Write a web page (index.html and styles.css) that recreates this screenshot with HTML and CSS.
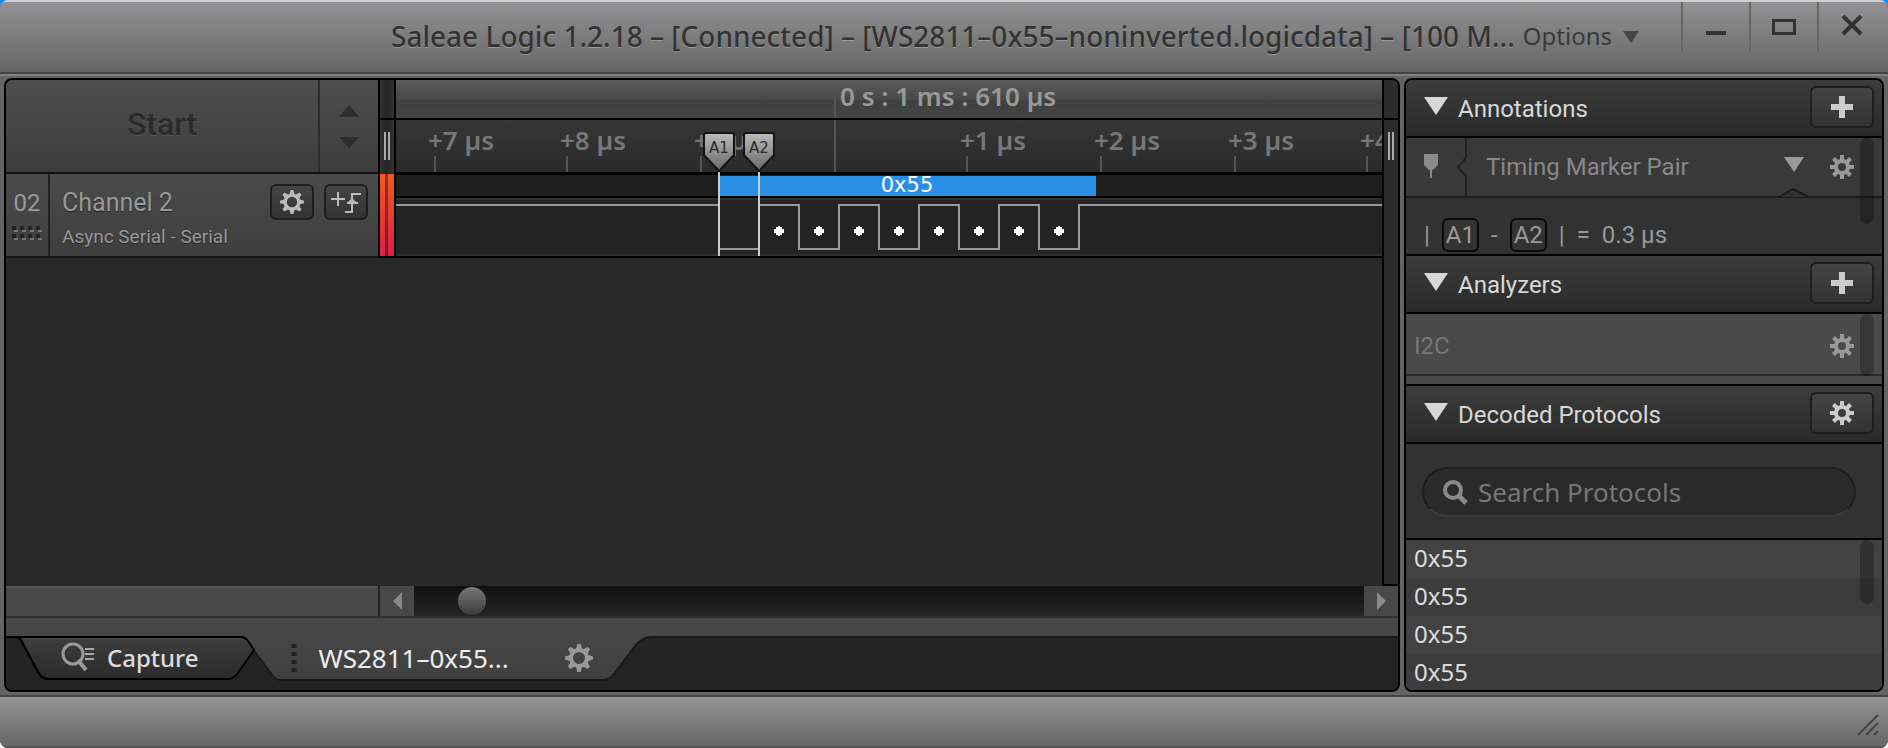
FILE: index.html
```html
<!DOCTYPE html>
<html lang="en">
<head>
<meta charset="utf-8">
<title>Saleae Logic 1.2.18</title>
<link rel="stylesheet" href="styles.css">
</head>
<body>
<svg class="defs" aria-hidden="true">
  <symbol id="gear" viewBox="-14 -14 28 28">
    <circle r="8" fill="none" stroke="currentColor" stroke-width="4"/>
    <g fill="currentColor">
      <path d="M-3 -9L-1.600 -14H1.600L3 -9Z"/>
      <path d="M-3 -9L-1.600 -14H1.600L3 -9Z" transform="rotate(45)"/>
      <path d="M-3 -9L-1.600 -14H1.600L3 -9Z" transform="rotate(90)"/>
      <path d="M-3 -9L-1.600 -14H1.600L3 -9Z" transform="rotate(135)"/>
      <path d="M-3 -9L-1.600 -14H1.600L3 -9Z" transform="rotate(180)"/>
      <path d="M-3 -9L-1.600 -14H1.600L3 -9Z" transform="rotate(225)"/>
      <path d="M-3 -9L-1.600 -14H1.600L3 -9Z" transform="rotate(270)"/>
      <path d="M-3 -9L-1.600 -14H1.600L3 -9Z" transform="rotate(315)"/>
    </g>
  </symbol>
  <symbol id="cog" viewBox="-12 -12 24 24">
    <circle r="6" fill="none" stroke="currentColor" stroke-width="4"/>
    <path d="M0 -12V-7M0 12V7M-12 0H-7M12 0H7M-8.500 -8.500L-5 -5M8.500 8.500L5 5M-8.500 8.500L-5 5M8.500 -8.500L5 -5" stroke="currentColor" stroke-width="4"/>
  </symbol>
  <symbol id="plus" viewBox="0 0 22 22"><path d="M8 0H14V8H22V14H14V22H8V14H0V8H8Z" fill="currentColor"/></symbol>
  <symbol id="down" viewBox="0 0 24 18"><path d="M0 0H24L12 18Z" fill="currentColor"/></symbol>
</svg>

<div class="window">
  <header class="titlebar">
    <h1 class="title">Saleae Logic 1.2.18 – [Connected] – [WS2811–0x55–noninverted.logicdata] – [100 M...</h1>
    <button class="options" type="button">Options <svg class="caret" width="18" height="12"><use href="#down"/></svg></button>
    <div class="winbtns">
      <button type="button" aria-label="Minimize"><svg width="26" height="24"><path d="M3 18H23" stroke="#333" stroke-width="4"/></svg></button>
      <button type="button" aria-label="Maximize"><svg width="26" height="24"><path d="M2.500 5.500H23.500V18.500H2.500Z" fill="none" stroke="#333" stroke-width="3"/></svg></button>
      <button type="button" aria-label="Close"><svg width="26" height="24"><path d="M4 1L22 19M22 1L4 19" stroke="#333" stroke-width="4"/></svg></button>
    </div>
  </header>

  <div class="body">
    <main class="capture">
      <div class="device">
        <div class="start">
          <button class="start-btn" type="button" disabled>Start</button>
          <button class="spin" type="button" aria-label="Capture settings"><svg width="20" height="44"><path d="M0 13L10 1L20 13Z" fill="#2c2c2c"/><path d="M0 33H20L10 44Z" fill="#2c2c2c"/></svg></button>
        </div>
        <div class="split split-l"><i></i><b></b></div>
        <div class="time">
          <svg class="chart" role="img" aria-label="Channel 2 timeline">
            <defs>
              <linearGradient id="g1" x1="0" y1="0" x2="0" y2="1"><stop offset="0" stop-color="#5c5c5c"/><stop offset=".5" stop-color="#484848"/><stop offset=".55" stop-color="#404040"/><stop offset="1" stop-color="#454545"/></linearGradient>
              <linearGradient id="g2" x1="0" y1="0" x2="0" y2="1"><stop offset="0" stop-color="#363636"/><stop offset="1" stop-color="#2a2a2a"/></linearGradient>
              <linearGradient id="g3" x1="0" y1="0" x2="0" y2="1"><stop offset="0" stop-color="#bbb"/><stop offset="1" stop-color="#666"/></linearGradient>
            </defs>
            <rect width="100%" height="178" fill="#000"/>
            <rect width="100%" height="38" fill="url(#g1)"/>
            <rect y="40" width="100%" height="52" fill="url(#g2)"/>
            <rect y="95" width="100%" height="21" fill="#1f1f1f"/>
            <rect y="118" width="100%" height="58" fill="#232323"/>
            <path d="M0 119H3000M0 175H3000" stroke="#303030" stroke-width="2"/>
            <path d="M439 16V38M439 40V92" stroke="#555" stroke-width="2"/>
            <path d="M39 76V92M171 76V92M305 76V92M571 76V92M705 76V92M839 76V92M971 76V92" stroke="#555" stroke-width="2"/>
            <text class="clock" x="444" y="26">0 s : 1 ms : 610 µs</text>
            <g class="ticks">
              <text x="32" y="70">+7 µs</text><text x="164" y="70">+8 µs</text><text x="298" y="70">+9 µs</text>
              <text x="564" y="70">+1 µs</text><text x="698" y="70">+2 µs</text><text x="832" y="70">+3 µs</text><text x="964" y="70">+4 µs</text>
            </g>
            <rect x="324" y="96" width="376" height="20" fill="#2a90e6"/>
            <text class="byte" x="511" y="112" text-anchor="middle">0x55</text>
            <path d="M0 125H323V169H363V125H403V169H443V125H483V169H523V125H563V169H603V125H643V169H683V125H3000" fill="none" stroke="#999" stroke-width="2"/>
            <g fill="#fff">
              <path id="dot" d="M382 146H384V147H386V149H388V153H386V155H384V156H382V155H380V153H378V149H380V147H382Z"/>
              <use href="#dot" x="40"/><use href="#dot" x="80"/><use href="#dot" x="120"/><use href="#dot" x="160"/><use href="#dot" x="200"/><use href="#dot" x="240"/><use href="#dot" x="280"/>
            </g>
            <path d="M323 92V176M363 92V176" stroke="#ccc" stroke-width="2"/>
            <g stroke="#141414" stroke-width="2" fill="url(#g3)">
              <path d="M310 53H336Q338 53 338 55V75L323 91L308 75V55Q308 53 310 53Z"/>
              <path d="M350 53H376Q378 53 378 55V75L363 91L348 75V55Q348 53 350 53Z"/>
            </g>
            <g class="tag" text-anchor="middle"><text x="323" y="73">A1</text><text x="363" y="73">A2</text></g>
          </svg>
        </div>
        <div class="split split-r"><i></i><b></b></div>

        <section class="channel">
          <div class="num"><span>02</span><svg width="30" height="14" class="grip"><path d="M0 2H30M0 10H30" stroke="#222" stroke-width="4" stroke-dasharray="4 4"/><path d="M2 5H32M2 13H32" stroke="#777" stroke-width="2" stroke-dasharray="4 4"/></svg></div>
          <div class="names"><strong>Channel 2</strong><small>Async Serial - Serial</small></div>
          <button class="btn small" type="button" aria-label="Channel settings"><svg width="24" height="24"><use href="#gear"/></svg></button>
          <button class="btn small" type="button" aria-label="Add trigger"><svg width="32" height="26"><path d="M1 10H15M8 3V17M15 23H22V5H31M17 14H28" fill="none" stroke="currentColor" stroke-width="2"/><path d="M17 14L22 9L27 14Z" fill="currentColor"/></svg></button>
        </section>
        <div class="bar"></div>

        <div class="hleft"></div>
        <div class="hscroll">
          <button type="button" aria-label="Scroll left"><svg width="9" height="18"><path d="M9 0V18L0 9Z" fill="#8a8a8a"/></svg></button>
          <div class="track"><div class="knob"></div></div>
          <button type="button" aria-label="Scroll right"><svg width="9" height="18"><path d="M0 0V18L9 9Z" fill="#8a8a8a"/></svg></button>
        </div>
      </div>

      <nav class="tabs">
        <svg class="tabshape" aria-hidden="true">
          <defs>
            <linearGradient id="g4" x1="0" y1="0" x2="0" y2="1"><stop offset="0" stop-color="#494949"/><stop offset="1" stop-color="#3f3f3f"/></linearGradient>
            <linearGradient id="g5" x1="0" y1="0" x2="0" y2="1"><stop offset="0" stop-color="#3e3e3e"/><stop offset="1" stop-color="#2a2a2a"/></linearGradient>
          </defs>
          <path d="M0 0H3000V19H645Q637 19 630 27L608 56Q604 62 596 62H274Q270 62 266 57L243 26Q238 19 232 19H0Z" fill="url(#g4)"/>
          <path d="M3000 19H645Q637 19 630 27L608 56Q604 62 596 62H274Q270 62 266 57L243 26" fill="none" stroke="#191919" stroke-width="2"/>
          <path d="M10 19H235Q239 19 242 23L248 32L234 52Q229 61 221 61H42Q36 61 32 54L17 26Q14 19 10 19Z" fill="url(#g5)" stroke="#000" stroke-width="2"/>
          <path d="M16 21H236" stroke="#4a4a4a" stroke-width="1"/>
          <path d="M0 19H10L14 22L34 62H0Z" fill="#232323"/>
          <path d="M0 19H10Q14 19 17 26L32 54Q36 61 42 61" fill="none" stroke="#000" stroke-width="2"/>
        </svg>
        <button class="tab tab-cap" type="button"><svg width="34" height="30"><circle cx="12" cy="12" r="10" fill="none" stroke="#999" stroke-width="3"/><path d="M17 18L25 28" stroke="#999" stroke-width="4"/><path d="M24 7H33M24 12H33M24 17H33" stroke="#aaa" stroke-width="2"/></svg>Capture</button>
        <div class="tab tab-file">
          <svg width="6" height="28"><path d="M3 0V28" stroke="#222" stroke-width="5" stroke-dasharray="4 4"/></svg>
          <span>WS2811–0x55...</span>
          <button type="button" aria-label="Tab settings"><svg width="28" height="28"><use href="#gear"/></svg></button>
        </div>
      </nav>
    </main>

    <aside class="side">
      <div class="head"><svg width="24" height="18"><use href="#down"/></svg><h2>Annotations</h2><button class="btn wide" type="button" aria-label="Add annotation"><svg width="22" height="22"><use href="#plus"/></svg></button></div>
      <div class="annot">
        <div class="scroll-thumb t1"></div>
        <div class="pair">
          <svg class="pin" width="50" height="58"><path d="M18 16H32V27L27 32H26V40H24V32H23L18 27Z" fill="#8a8a8a"/></svg>
          <svg class="notch" width="12" height="58"><path d="M10 0V20L2 29L10 38V58" fill="none" stroke="#222" stroke-width="2"/></svg>
          <span class="pair-name">Timing Marker Pair</span>
          <svg class="pair-down" width="20" height="15"><use href="#down"/></svg>
          <button type="button" aria-label="Pair settings"><svg width="24" height="24"><use href="#cog"/></svg></button>
          <svg class="peak" width="32" height="10"><path d="M1 9L15 1L31 9" fill="#303030" stroke="#1c1c1c" stroke-width="2"/></svg>
        </div>
        <div class="formula"><span>|</span><kbd>A1</kbd><span>-</span><kbd>A2</kbd><span>|</span><span>=</span><span>0.3 µs</span></div>
      </div>
      <div class="head"><svg width="24" height="18"><use href="#down"/></svg><h2>Analyzers</h2><button class="btn wide" type="button" aria-label="Add analyzer"><svg width="22" height="22"><use href="#plus"/></svg></button></div>
      <div class="analyzers">
        <div class="scroll-thumb t2"></div>
        <div class="analyzer"><span>I2C</span><button type="button" aria-label="Analyzer settings"><svg width="24" height="24"><use href="#cog"/></svg></button></div>
      </div>
      <div class="head"><svg width="24" height="18"><use href="#down"/></svg><h2>Decoded Protocols</h2><button class="btn wide" type="button" aria-label="Protocol settings"><svg width="24" height="24"><use href="#cog"/></svg></button></div>
      <div class="search">
        <label class="field"><svg width="26" height="26"><circle cx="11" cy="11" r="8" fill="none" stroke="#8a8a8a" stroke-width="4"/><path d="M16 16L24 24" stroke="#8a8a8a" stroke-width="5"/></svg><input type="text" placeholder="Search Protocols" aria-label="Search Protocols"></label>
      </div>
      <div class="results">
        <div class="scroll-thumb t3"></div>
        <ul><li>0x55</li><li>0x55</li><li>0x55</li><li>0x55</li></ul>
      </div>
    </aside>
  </div>

  <footer class="status"><svg width="22" height="22"><path d="M1 21L21 1M9 21L21 9M17 21L21 17" stroke="#444" stroke-width="2"/></svg></footer>
</div>
</body>
</html>
```

FILE: styles.css
```css
* { box-sizing: border-box; }
body {
  margin: 0;
  height: 100vh;
  background: linear-gradient(#0a8cff 50%, #fff 50%);
  font-family: Roboto, "Liberation Sans", sans-serif;
  font-size: 24px;
  color: #999;
}
button { background: none; border: 0; padding: 0; margin: 0; font: inherit; color: inherit; display: flex; align-items: center; justify-content: center; }
svg { display: block; flex: none; }
.defs { position: absolute; width: 0; height: 0; }

.window { height: 100vh; min-height: 700px; display: flex; flex-direction: column; background: #646464; border-radius: 8px; overflow: hidden; }

.titlebar { height: 74px; flex: none; display: flex; align-items: flex-start; padding-right: 3px; background: linear-gradient(#929294, #666); border-top: 2px solid #cfd0d2; border-bottom: 2px solid #444; font-family: "Noto Sans", sans-serif; color: #333; }
.title { flex: 1; margin: 0; padding-right: 8px; line-height: 68px; font-size: 28px; font-weight: 500; text-align: right; white-space: nowrap; overflow: hidden; text-shadow: 0 1px 0 #999; }
.options { height: 66px; gap: 10px; color: #3a3a3a; margin-right: 41px; }
.caret { margin-top: 4px; color: #444; }
.winbtns { display: flex; }
.winbtns button { width: 68px; height: 50px; border-left: 2px solid #666; }

.body { flex: 1; min-height: 0; display: flex; gap: 4px; padding: 2px 4px 3px; border-top: 2px solid #808080; }
.capture { flex: 1; min-width: 0; display: flex; flex-direction: column; border: 2px solid #000; border-radius: 8px; overflow: hidden; background: #282828; }
.device { flex: 1; min-height: 0; display: grid; grid-template-columns: 372px 18px 1fr 16px; grid-template-rows: 94px 84px 1fr 32px; }

.start { display: flex; background: linear-gradient(#4e4e4e, #3d3d3d); border-bottom: 2px solid #111; }
.start-btn { flex: 1; font-size: 32px; font-weight: 500; color: #2b2b2b; text-shadow: 0 1px 0 #555; padding-bottom: 4px; }
.spin { width: 60px; border-left: 2px solid #2c2c2c; }
.split { background: linear-gradient(90deg, #333, #242424 50%, #333); border: solid #000; border-width: 0 2px; display: flex; flex-direction: column; align-items: center; }
.split i { width: 100%; height: 40px; border-bottom: 2px solid #000; }
.split b { width: 6px; height: 28px; margin-top: 12px; border: solid #aaa; border-width: 0 2px; }
.split-r { grid-column: 4; grid-row: 1 / 4; border-width: 0 0 2px 2px; background: #2c2c2c; }
.time { grid-column: 3; grid-row: 1 / 3; overflow: hidden; }
.chart { width: 100%; height: 178px; }
.clock, .ticks { font-family: "Noto Sans", sans-serif; font-weight: 600; font-size: 26px; }
.clock { fill: #999; }
.ticks { fill: #777; }
.byte { font: 21px "DejaVu Sans", sans-serif; fill: #fff; }
.tag { font: 15px "DejaVu Sans", sans-serif; fill: #2c2c2c; }

.channel { grid-column: 1; grid-row: 2; display: flex; background: linear-gradient(#4b4b4b, #3e3e3e); border-bottom: 2px solid #151515; padding-right: 10px; }
.num { width: 44px; border-right: 2px solid #222; display: flex; flex-direction: column; align-items: center; padding-top: 14px; gap: 8px; line-height: 30px; }
.names { flex: 1; display: flex; flex-direction: column; padding: 14px 0 0 12px; text-shadow: 0 1px 1px #222; }
.names strong { font-weight: 400; line-height: 30px; font-size: 25px; }
.names small { font-size: 19px; line-height: 38px; }
.btn { border: 2px solid #1e1e1e; border-radius: 6px; background: linear-gradient(#444, #333); color: #bbb; }
.small { width: 44px; height: 36px; margin: 10px 0 0 10px; }
.bar { grid-column: 2; grid-row: 2; border: solid #000; border-width: 0 2px 2px; background: linear-gradient(90deg, transparent 35%, #0006 35% 60%, transparent 60%), linear-gradient(#f4581e, #dd1f48); }

.hleft { grid-column: 1; grid-row: 4; background: #484848; border-top: 2px solid #555; border-bottom: 2px solid #333; }
.hscroll { grid-column: 2 / 5; grid-row: 4; display: flex; border-left: 2px solid #222; border-bottom: 2px solid #333; }
.hscroll button { width: 34px; background: #484848; }
.track { flex: 1; padding: 1px 0 0 44px; background: linear-gradient(#101010, #262626); }
.knob { width: 28px; height: 28px; border-radius: 50%; background: linear-gradient(#777, #3c3c3c); }

.tabs { position: relative; height: 72px; flex: none; display: flex; background: #232323; }
.tabshape { position: absolute; inset: 0; width: 100%; height: 100%; }
.tab { position: relative; display: flex; align-items: center; color: #ddd; }
.tab-cap { margin: 19px 0 0 55px; height: 40px; gap: 12px; font: 500 24px "Noto Sans", sans-serif; }
.tab-file { margin: 20px 0 0 92px; height: 40px; font: 26px "Noto Sans", sans-serif; color: #eee; }
.tab-file span { padding: 0 56px 0 22px; }
.tab-file button { color: #999; }

.side { width: 480px; flex: none; display: flex; flex-direction: column; border: 2px solid #000; border-radius: 8px; overflow: hidden; background: #323232; }
.head { flex: none; height: 58px; display: flex; align-items: center; gap: 10px; padding: 0 8px 0 18px; background: linear-gradient(#3c3c3c, #2a2a2a); border-bottom: 2px solid #000; color: #d8d8d8; }
.head > svg { margin-bottom: 4px; }
.head h2 { flex: 1; margin: 0; padding-top: 2px; font-size: 24px; font-weight: 400; }
.wide { width: 64px; height: 42px; color: #ccc; margin-bottom: 2px; }
.annot, .analyzers, .results { position: relative; }
.annot { height: 118px; border-bottom: 2px solid #000; overflow: hidden; }
.scroll-thumb { position: absolute; z-index: 1; top: 0; right: 8px; width: 14px; border-radius: 7px; background: #0004; }
.t1 { height: 86px; }
.t2 { height: 62px; }
.t3 { height: 64px; }
.pair { position: relative; height: 60px; display: flex; align-items: center; padding-right: 28px; background: #393939; border-bottom: 2px solid #1c1c1c; }
.pair-name { flex: 1; padding-left: 18px; color: #888; }
.pair-down { margin-right: 26px; margin-bottom: 6px; color: #999; }
.pair button, .analyzer button { color: #999; }
.peak { position: absolute; right: 72px; bottom: -2px; }
.formula { display: flex; align-items: center; height: 74px; padding-left: 18px; }
.formula span { margin-right: 12px; }
.formula kbd { font: inherit; line-height: 30px; padding: 0 2px; margin-right: 12px; border: 2px solid #0a0a0a; border-radius: 6px; }
.analyzers { height: 72px; background: #484848; border-bottom: 2px solid #000; }
.analyzer { height: 62px; display: flex; align-items: center; justify-content: space-between; padding: 4px 28px 0 8px; background: #4a4a4a; border-bottom: 2px solid #2a2a2a; color: #777; }
.search { height: 96px; flex: none; padding: 23px 26px 0 16px; border-bottom: 2px solid #000; }
.field { height: 50px; display: flex; align-items: center; gap: 10px; padding-left: 18px; border-radius: 25px; background: #2a2a2a; border: 2px solid #1e1e1e; border-bottom-color: #3a3a3a; }
.field input { flex: 1; min-width: 0; border: 0; background: none; color: #ccc; font: 26px "Noto Sans", sans-serif; padding: 0; outline: 0; }
.field input::placeholder { color: #777; }
.results { flex: 1; min-height: 0; overflow: hidden; }
.results ul { list-style: none; margin: 0; padding: 0; }
.results li { height: 38px; line-height: 36px; padding-left: 8px; font-family: "Noto Sans", sans-serif; font-size: 24px; color: #ddd; background: #424242; }
.results li:nth-child(even) { background: #3c3c3c; }

.status { height: 53px; flex: none; display: flex; align-items: center; justify-content: flex-end; padding: 6px 9px 0; background: linear-gradient(#929294, #686868); border-top: 2px solid #444; border-bottom: 2px solid #555; }
```
